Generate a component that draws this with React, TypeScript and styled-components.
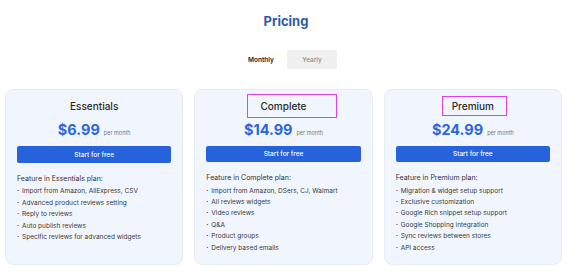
import React from 'react';
import styled, { createGlobalStyle } from 'styled-components';

interface Plan {
  name: string;
  price: string;
  features: string[];
  box?: { left: number; right: number; y: number };
}

const plans: Plan[] = [
  {
    name: 'Essentials',
    price: '$6.99',
    features: [
      'Import from Amazon, AliExpress, CSV',
      'Advanced product reviews setting',
      'Reply to reviews',
      'Auto publish reviews',
      'Specific reviews for advanced widgets',
    ],
  },
  {
    name: 'Complete',
    price: '$14.99',
    box: { left: 12, right: 29, y: 4 },
    features: [
      'Import from Amazon, DSers, CJ, Walmart',
      'All reviews widgets',
      'Video reviews',
      'Q&A',
      'Product groups',
      'Delivery based emails',
    ],
  },
  {
    name: 'Premium',
    price: '$24.99',
    box: { left: 9, right: 12, y: 2 },
    features: [
      'Migration & widget setup support',
      'Exclusive customization',
      'Google Rich snippet setup support',
      'Google Shopping integration',
      'Sync reviews between stores',
      'API access',
    ],
  },
];

const App: React.FC = () => {
  return (
    <Page>
      <GlobalStyle />
      <Heading>Pricing</Heading>
      <Toggle>
        <ToggleOption $active>Monthly</ToggleOption>
        <ToggleOption>Yearly</ToggleOption>
      </Toggle>
      <Cards>
        {plans.map((plan) => (
          <Card key={plan.name}>
            <TitleRow>
              <PlanName
                $boxed={!!plan.box}
                $padL={plan.box?.left ?? 0}
                $padR={plan.box?.right ?? 0}
                $padY={plan.box?.y ?? 0}
              >
                {plan.name}
              </PlanName>
            </TitleRow>
            <PriceRow>
              <Price>{plan.price}</Price>
              <Period>per month</Period>
            </PriceRow>
            <StartButton>Start for free</StartButton>
            <FeatureHead>{`Feature in ${plan.name} plan:`}</FeatureHead>
            <FeatureList>
              {plan.features.map((f) => (
                <FeatureItem key={f}>{f}</FeatureItem>
              ))}
            </FeatureList>
          </Card>
        ))}
      </Cards>
    </Page>
  );
};

const GlobalStyle = createGlobalStyle`
  body {
    margin: 0;
    background: #fff;
    font-family: Inter, "Noto Sans", sans-serif;
  }
`;

const Page = styled.div`
  width: 572px;
  height: 275px;
  display: flex;
  flex-direction: column;
  align-items: center;
  overflow: hidden;
`;

const Heading = styled.h1`
  margin: 10px 0 0 0;
  font-size: 13px;
  line-height: 22px;
  font-weight: 700;
  color: #2f5aa6;
`;

const Toggle = styled.div`
  display: flex;
  align-items: center;
  margin: 18px 0 0 8px;
  gap: 8px;
`;

const ToggleOption = styled.div<{ $active?: boolean }>`
  width: ${(p) => (p.$active ? '36px' : '50px')};
  height: 19px;
  display: flex;
  align-items: center;
  justify-content: center;
  font-size: 6.5px;
  font-weight: ${(p) => (p.$active ? 600 : 500)};
  color: ${(p) => (p.$active ? '#222' : '#8a8a8a')};
  background: ${(p) => (p.$active ? 'transparent' : '#f0f0f0')};
  border-radius: 2px;
`;

const Cards = styled.div`
  align-self: flex-start;
  margin: 20px 0 0 5px;
  width: 557px;
  display: grid;
  grid-template-columns: repeat(3, 1fr);
  gap: 11px;
`;

const Card = styled.div`
  box-sizing: border-box;
  height: 176px;
  padding: 4px 11px 10px;
  background: #f1f5fd;
  border: 1px solid #e6ecf7;
  border-radius: 8px;
  display: flex;
  flex-direction: column;
`;

const TitleRow = styled.div`
  height: 24px;
  display: flex;
  align-items: center;
  justify-content: center;
`;

const PlanName = styled.span<{ $boxed: boolean; $padL: number; $padR: number; $padY: number }>`
  font-size: 10px;
  line-height: 14px;
  font-weight: 500;
  color: #2a2a2a;
  padding: ${(p) => `${p.$padY}px ${p.$padR}px ${p.$padY}px ${p.$padL}px`};
  margin-left: ${(p) => p.$padR - p.$padL}px;
  border: 1px solid ${(p) => (p.$boxed ? '#e040e8' : 'transparent')};
`;

const PriceRow = styled.div`
  margin-top: 2px;
  height: 20px;
  display: flex;
  align-items: baseline;
  justify-content: center;
  gap: 4px;
`;

const Price = styled.span`
  font-size: 14.5px;
  line-height: 20px;
  font-weight: 700;
  color: #2b67dc;
`;

const Period = styled.span`
  font-size: 5.5px;
  color: #777;
`;

const StartButton = styled.button`
  margin-top: 6px;
  height: 17px;
  width: 100%;
  border: none;
  border-radius: 2px;
  background: #2562db;
  color: #fff;
  font-family: inherit;
  font-size: 6.5px;
  font-weight: 500;
  padding: 0;
`;

const FeatureHead = styled.div`
  margin-top: 10px;
  font-size: 7px;
  line-height: 11.4px;
  color: #333;
`;

const FeatureList = styled.ul`
  list-style: none;
  margin: 2px 0 0;
  padding: 0;
`;

const FeatureItem = styled.li`
  font-size: 6.5px;
  line-height: 11.4px;
  color: #3a3a3a;
  white-space: nowrap;
  &::before {
    content: '·';
    display: inline-block;
    width: 5px;
    font-weight: 700;
  }
`;

export default App;
